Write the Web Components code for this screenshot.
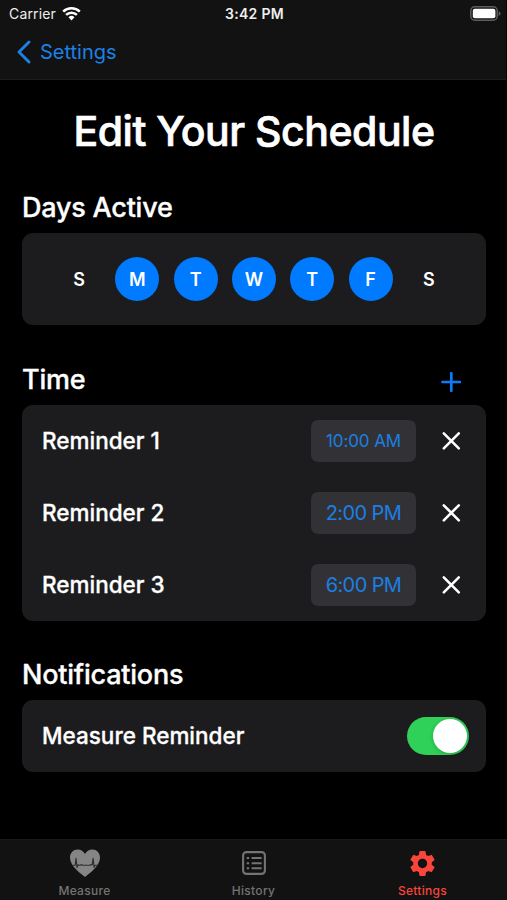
<!DOCTYPE html>
<html lang="en">
<head>
<meta charset="utf-8">
<title>Edit Your Schedule</title>
<style>
html,body{margin:0;background:#000;height:100%;overflow:hidden}
body{font-family:Inter,"Liberation Sans",sans-serif;color:#fff}
</style>
</head>
<body>
<schedule-screen></schedule-screen>
<script>
function define(name, html) {
  customElements.define(name, class extends HTMLElement {
    constructor() {
      super();
      const t = document.createElement('template');
      t.innerHTML = html;
      this.attachShadow({ mode: 'open' }).append(t.content.cloneNode(true));
    }
  });
}

define('status-bar', `
<style>
:host{display:grid;grid-template-columns:1fr auto 1fr;align-items:center;height:27px;padding:0 6px 0 9px;font-size:14px;color:#eee}
.l{display:flex;align-items:center;gap:6px}
.carrier{letter-spacing:.15px}
.time{font-weight:600;letter-spacing:.3px}
.r{justify-self:end;display:flex;margin-right:-1px}
svg{display:block}
</style>
<div class="l"><span class="carrier">Carrier</span>
<svg width="19" height="15" viewBox="0 0 19 15"><g fill="none" stroke="#fff" stroke-width="2.5"><path d="M1.2 5.6a11.8 11.8 0 0 1 16.6 0"/><path d="M4.1 8.9a7.6 7.6 0 0 1 10.800 0"/></g><path d="M9.5 14.400L6.5 11.300a4.300 4.300 0 0 1 6 0z" fill="#fff"/></svg></div>
<span class="time">3:42 PM</span>
<div class="r"><svg width="31" height="15" viewBox="0 0 31 15"><rect x=".8" y=".8" width="26.4" height="13.4" rx="4" fill="none" stroke="#5d5d5f" stroke-width="1.5"/><rect x="2.8" y="2.8" width="22.6" height="9.4" rx="2" fill="#fff"/><path d="M28.6 5.2v4.8q2-.7 2-2.4t-2-2.4z" fill="#5d5d5f"/></svg></div>`);

define('back-link', `
<style>
:host{display:flex;align-items:center;gap:9.500px;height:50px;padding-left:16.500px;color:#1c81e6;font-size:20px}
svg{display:block}
</style>
<svg width="14" height="24" viewBox="0 0 14 24"><path d="M12 2L2 12l10 10" fill="none" stroke="currentColor" stroke-width="2.9" stroke-linecap="round" stroke-linejoin="round"/></svg>
<span><slot></slot></span>`);

define('nav-header', `
<style>:host{display:block;box-sizing:border-box;height:80px;margin-right:1px;background:#121212;border-bottom:1px solid #1d1d1d}</style>
<slot></slot>`);

define('section-title', `
<style>
:host{display:flex;justify-content:space-between;align-items:center;height:34px;font-size:27px;font-weight:550;letter-spacing:-.22px;padding-right:25px}
span{padding-bottom:2px;-webkit-text-stroke:.35px #fff}
</style><span><slot></slot></span><slot name="action"></slot>`);

define('add-icon', `
<style>:host{display:block;margin-top:4px}svg{display:block}</style>
<svg width="20" height="20" viewBox="0 0 20 20"><path d="M10.300 1.200v17.600M1.500 10h17.600" stroke="#0a7cf5" stroke-width="2.7" stroke-linecap="round"/></svg>`);

define('card-box', `
<style>:host{display:block;background:#1c1c1e;border-radius:11px;overflow:hidden}</style><slot></slot>`);

define('day-picker', `
<style>:host{display:flex;justify-content:center;align-items:center;gap:14.300px;height:92px}</style><slot></slot>`);

define('day-dot', `
<style>
:host{display:flex;align-items:center;justify-content:center;width:44px;height:44px;border-radius:50%;font-size:18px;font-weight:600}
:host([on]){background:#007aff}
</style><span><slot></slot></span>`);

define('list-row', `
<style>
:host{display:flex;align-items:center;height:72px;padding:0 17px 0 20px;font-size:22.500px;font-weight:550}
.label{flex:1;padding-bottom:2px;-webkit-text-stroke:.3px #fff}
</style><span class="label"><slot></slot></span><slot name="end"></slot>`);

define('time-pill', `
<style>
:host{display:flex;align-items:center;justify-content:center;width:105px;height:42px;border-radius:7px;background:#323236;color:#1c7fe2;font-size:20px;letter-spacing:-.6px;font-weight:400;margin-right:25px}
:host([small]){font-size:17px;letter-spacing:-.1px}
</style><span><slot></slot></span>`);

define('remove-icon', `
<style>:host{display:block;margin-right:8px}svg{display:block}</style>
<svg width="20" height="20" viewBox="0 0 20 20"><path d="M2.800 2.300l15 15M17.800 2.300l-15 15" stroke="#fff" stroke-width="2.600" stroke-linecap="round"/></svg>`);

define('toggle-switch', `
<style>
:host{display:flex;justify-content:flex-end;align-items:center;box-sizing:border-box;width:62.5px;height:38px;border-radius:19px;background:#30d158;padding-right:2px}
i{width:34px;height:34px;border-radius:50%;background:#fff;box-shadow:0 1px 4px rgba(0,0,0,.22)}
</style><i></i>`);

define('tab-item', `
<style>
:host{flex:1;display:flex;flex-direction:column;align-items:center;color:#747474;font-size:12px;font-weight:500;letter-spacing:.3px}
:host([active]){color:#f9453a}
.icon{height:30px;display:flex;align-items:center}
.label{line-height:16px;margin-top:5px}
</style><div class="icon"><slot name="icon"></slot></div><span class="label"><slot></slot></span>`);

define('heart-icon', `<style>:host,svg{display:block}</style>
<svg width="32" height="28" viewBox="0 0 32 28"><path d="M16 28C12 24.500 1 17.500 1 8.500 1 3.800 4.400.4 8.600.4 11.900.4 14.700 2.200 16 5 17.300 2.200 20.100.4 23.400.4 27.600.4 31 3.800 31 8.500 31 17.500 20 24.500 16 28z" fill="#858585"/><path d="M4 16.300h2.200l.8-7 1 9.200 1-2.700 1 .5h1.500l1-1 1 1h7.700l1-.8 1 .4.900-6.600 1 9.200.9-2.200h2.200" fill="none" stroke="#2c2c2c" stroke-width="1.100" stroke-linejoin="round"/></svg>`);

define('list-icon', `<style>:host,svg{display:block}</style>
<svg width="24" height="24" viewBox="0 0 24 24"><rect x="1.100" y="1.100" width="21.800" height="21.800" rx="3.400" fill="none" stroke="#747474" stroke-width="2.100"/><path d="M9.600 7h10M9.600 12.200h10M9.600 17.300h10M4.700 7h2.400M4.700 12.200h2.400M4.700 17.300h2.400" stroke="#747474" stroke-width="2.100"/></svg>`);

define('gear-icon', `<style>:host,svg{display:block}</style>
<svg width="31" height="31" viewBox="0 0 24 24"><path fill="#f9453a" d="M19.140 12.940c.04-.3.060-.610.060-.940 0-.320-.020-.640-.070-.940l2.030-1.580c.180-.140.230-.410.120-.610l-1.920-3.320c-.120-.220-.370-.290-.590-.220l-2.390.960c-.5-.380-1.030-.7-1.620-.940l-.360-2.540c-.040-.240-.240-.410-.480-.410h-3.840c-.240 0-.430.170-.470.410l-.360 2.540c-.590.240-1.130.570-1.620.940l-2.390-.960c-.220-.080-.470 0-.590.220L2.740 8.870c-.120.210-.080.470.120.610l2.030 1.580c-.050.3-.090.630-.090.940s.020.640.070.940l-2.030 1.580c-.180.140-.230.410-.120.610l1.920 3.320c.120.220.370.290.590.220l2.390-.960c.5.380 1.030.7 1.620.940l.360 2.540c.050.240.240.410.480.410h3.840c.240 0 .440-.170.470-.410l.360-2.540c.590-.240 1.130-.560 1.620-.940l2.390.960c.220.080.470 0 .590-.220l1.920-3.320c.120-.220.070-.470-.120-.610l-2.010-1.580zM12 15.600c-1.980 0-3.600-1.620-3.600-3.600s1.620-3.600 3.600-3.600 3.600 1.620 3.600 3.600-1.620 3.600-3.600 3.600z"/></svg>`);

define('tab-bar', `
<style>:host{display:flex;box-sizing:border-box;height:61px;padding-top:8px;background:#121212;border-top:1px solid #191919}</style><slot></slot>`);

define('schedule-screen', `
<style>
:host{display:flex;flex-direction:column;width:507px;height:900px;background:#000}
main{flex:1;padding:0 21px 0 22px}
h1{margin:22px 0 0;height:58px;line-height:58px;font-size:41px;font-weight:550;letter-spacing:-.48px;-webkit-text-stroke:.7px #fff;text-align:center;white-space:nowrap}
section-title.days{margin-top:31px;margin-bottom:8px}
section-title.time{margin-top:38px;margin-bottom:8px}
section-title.note{margin-top:37px;margin-bottom:8px}
</style>
<nav-header><status-bar></status-bar><back-link>Settings</back-link></nav-header>
<main>
<h1>Edit Your Schedule</h1>
<section-title class="days">Days Active</section-title>
<card-box><day-picker><day-dot>S</day-dot><day-dot on>M</day-dot><day-dot on>T</day-dot><day-dot on>W</day-dot><day-dot on>T</day-dot><day-dot on>F</day-dot><day-dot>S</day-dot></day-picker></card-box>
<section-title class="time">Time<add-icon slot="action"></add-icon></section-title>
<card-box>
<list-row>Reminder 1<time-pill slot="end" small>10:00 AM</time-pill><remove-icon slot="end"></remove-icon></list-row>
<list-row>Reminder 2<time-pill slot="end">2:00 PM</time-pill><remove-icon slot="end"></remove-icon></list-row>
<list-row>Reminder 3<time-pill slot="end">6:00 PM</time-pill><remove-icon slot="end"></remove-icon></list-row>
</card-box>
<section-title class="note">Notifications</section-title>
<card-box><list-row>Measure Reminder<toggle-switch slot="end"></toggle-switch></list-row></card-box>
</main>
<tab-bar>
<tab-item><heart-icon slot="icon"></heart-icon>Measure</tab-item>
<tab-item><list-icon slot="icon"></list-icon>History</tab-item>
<tab-item active><gear-icon slot="icon"></gear-icon>Settings</tab-item>
</tab-bar>`);
</script>
</body>
</html>
